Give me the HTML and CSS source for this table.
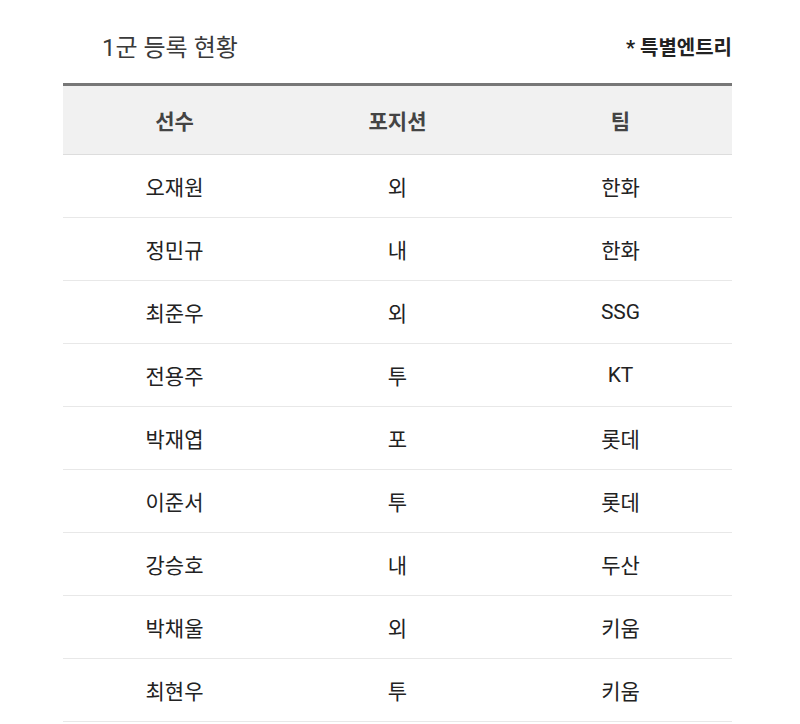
FILE: index.html
```html
<!DOCTYPE html>
<html lang="ko">
<head>
<meta charset="utf-8">
<link rel="stylesheet" href="styles.css">
</head>
<body>
<div class="wrap">
  <div class="top">
    <h2 class="title">1군 등록 현황</h2>
    <span class="note">* 특별엔트리</span>
  </div>
  <table class="roster">
    <thead>
      <tr><th>선수</th><th>포지션</th><th>팀</th></tr>
    </thead>
    <tbody>
      <tr><td>오재원</td><td>외</td><td>한화</td></tr>
      <tr><td>정민규</td><td>내</td><td>한화</td></tr>
      <tr><td>최준우</td><td>외</td><td>SSG</td></tr>
      <tr><td>전용주</td><td>투</td><td>KT</td></tr>
      <tr><td>박재엽</td><td>포</td><td>롯데</td></tr>
      <tr><td>이준서</td><td>투</td><td>롯데</td></tr>
      <tr><td>강승호</td><td>내</td><td>두산</td></tr>
      <tr><td>박채울</td><td>외</td><td>키움</td></tr>
      <tr><td>최현우</td><td>투</td><td>키움</td></tr>
    </tbody>
  </table>
</div>
</body>
</html>
```

FILE: styles.css
```css
html, body {
  margin: 0;
  padding: 0;
  background: #fff;
}
body {
  font-family: Roboto, "Noto Sans CJK KR", "Noto Sans", sans-serif;
  color: #222;
}
.wrap {
  width: 669px;
  margin-left: 63px;
}
.top {
  display: flex;
  justify-content: space-between;
  align-items: flex-start;
  height: 83px;
  padding-top: 30px;
  box-sizing: border-box;
}
.title {
  margin: 0 0 0 39px;
  font-size: 24px;
  line-height: 36px;
  font-weight: 400;
  color: #3a3a3a;
}
.note {
  font-size: 20px;
  line-height: 36px;
  font-weight: 700;
  color: #222;
}
.roster {
  width: 100%;
  border-collapse: collapse;
  table-layout: fixed;
  border-top: 3px solid #777;
}
.roster th {
  height: 68px;
  background: #f1f1f1;
  font-size: 21px;
  font-weight: 700;
  color: #444;
  border-bottom: 1px solid #ddd;
  padding: 0;
}
.roster td {
  height: 62px;
  font-size: 21px;
  text-align: center;
  border-bottom: 1px solid #e8e8e8;
  padding: 0;
  color: #222;
}
```
